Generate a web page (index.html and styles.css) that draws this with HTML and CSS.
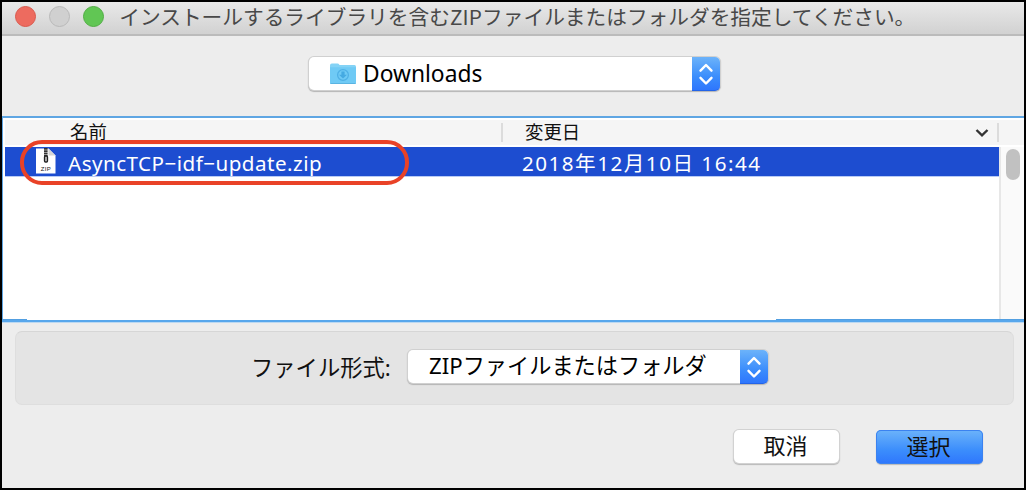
FILE: index.html
```html
<!DOCTYPE html>
<html lang="ja">
<head>
<meta charset="utf-8">
<title>Downloads</title>
<link rel="stylesheet" href="styles.css">
</head>
<body>
<main class="window">
  <header class="titlebar">
    <span class="light light-close"></span>
    <span class="light light-min"></span>
    <span class="light light-zoom"></span>
    <h1 class="title">インストールするライブラリを含む<span class="latin">ZIP</span>ファイルまたはフォルダを指定してください。</h1>
  </header>
  <section class="location">
    <div class="select select-folder">
      <svg class="folder" viewBox="0 0 26 22" width="26" height="22">
        <path d="M0 2.5Q0 .6 1.8 .6H7.4Q8.6 .6 9.6 2H24.5Q26 2 26 3.8V19.5Q26 21 24.5 21H1.5Q0 21 0 19.5Z" fill="#84d3f6"/>
        <path d="M0 4.3H26V19.5Q26 21 24.5 21H1.5Q0 21 0 19.5Z" fill="#6fcaf5"/>
        <path d="M.5 20.5H25.5" stroke="#5ab4e2"/>
        <circle cx="13" cy="12" r="5.4" fill="none" stroke="#4fb0e5" stroke-width="1.3"/>
        <path d="M11.4 8.6H14.6V11.8H17L13 15.6L9 11.8H11.4Z" fill="#45aae2"/>
      </svg>
      <span class="folder-name">Downloads</span>
      <span class="stepper"><svg viewBox="0 0 28 34" width="28" height="34"><path d="M8.5 13.7L14 8L19.5 13.7M8.5 20.8L14 26.5L19.5 20.8"/></svg></span>
    </div>
  </section>
  <section class="files">
    <div class="columns">
      <span class="col-name">名前</span>
      <span class="col-date">変更日</span>
      <svg class="sort" viewBox="0 0 14 10" width="14" height="10"><path d="M1.5 2L7 7.4L12.5 2"/></svg>
    </div>
    <div class="body">
      <div class="rows">
        <div class="row">
          <svg class="zip" viewBox="0 0 20 26" width="20" height="26">
            <path d="M0 .5H12.5L19.5 7.5V25.5H0Z" fill="#fff"/>
            <path d="M12.5 .5V7.5H19.5Z" fill="#d5d5d5"/>
            <path d="M9.8 0V9" stroke="#333" stroke-width="3.6" stroke-dasharray="1.8 .5"/>
            <rect x="8.5" y="8" width="3" height="6" rx="1" fill="#bbb" stroke="#222" stroke-width="1.3"/>
            <text class="zip-label" x="10" y="23.2">ZIP</text>
          </svg>
          <span class="file-name">AsyncTCP−idf−update.zip</span>
          <span class="file-date">2018年12月10日 16:44</span>
          <span class="highlight"></span>
        </div>
      </div>
      <div class="scrollbar"><span class="thumb"></span></div>
    </div>
    <div class="edge"><span class="edge-left"></span><span class="edge-right"></span></div>
  </section>
  <section class="format">
    <span class="format-label">ファイル形式:</span>
    <div class="select select-format">
      <span class="format-name">ZIPファイルまたはフォルダ</span>
      <span class="stepper"><svg viewBox="0 0 28 34" width="28" height="34"><path d="M8.5 13.7L14 8L19.5 13.7M8.5 20.8L14 26.5L19.5 20.8"/></svg></span>
    </div>
  </section>
  <footer class="actions">
    <button class="button">取消</button>
    <button class="button button-primary">選択</button>
  </footer>
</main>
</body>
</html>
```
FILE: styles.css
```css
* { box-sizing: border-box; }
body { margin: 0; font-family: "Noto Sans", "Noto Sans CJK JP", sans-serif; color: #111; }
svg { display: block; flex: none; }
span { white-space: nowrap; }

.window { width: 1026px; height: 490px; border: 2px solid #000; background: #ededed; display: flex; flex-direction: column; overflow: hidden; }

.titlebar { flex: none; height: 34px; display: flex; align-items: center; padding: 0 0 4px 13px; background: linear-gradient(#e9e9e9, #d2d2d2 31px); border-bottom: 2px solid #bbb; }
.light { width: 21px; height: 21px; margin-right: 13.1px; border-radius: 50%; border: 1px solid; flex: none; }
.light-close { background: #ed6b5f; border-color: #d9594d; }
.light-min { background: #d0d0d0; border-color: #b9b9b9; }
.light-zoom { background: #61c654; border-color: #51ad44; }
.title { margin: 0 0 0 2px; font: 400 20.7px/30px "Noto Sans CJK JP", sans-serif; color: #484848; white-space: nowrap; }
.latin { letter-spacing: .2px; }

.location { flex: none; height: 80px; padding: 21px 0 0 307px; }
.select { height: 33px; display: flex; align-items: center; background: #fff; border-radius: 5px; box-shadow: 0 0 0 1px #d0d0d0, 0 1px 1px 1px #b4b4b4; }
.select-folder { width: 411px; padding-left: 21px; }
.folder { margin-top: 1px; }
.folder-name { margin: 1px 0 0 7px; font-size: 22.8px; line-height: 30px; color: #000; }
.stepper { margin-left: auto; width: 28px; height: 34px; border-radius: 0 5px 5px 0; background: linear-gradient(#6cb3fa, #3b8dfc 60%, #2e76fd); border-bottom: 1px solid #2364e8; flex: none; }
.stepper path { fill: none; stroke: #fff; stroke-width: 2.4; stroke-linecap: round; stroke-linejoin: round; }

.files { flex: none; height: 207px; background: #fff; border-top: 2px solid #5fa6e3; border-left: 1px solid #5fa6e3; display: flex; flex-direction: column; }
.columns { height: 25px; margin: 2px 0 2px 2px; background: #f5f5f5; display: flex; align-items: center; font: 18.4px/25px "Noto Sans CJK JP", sans-serif; }
.col-name { width: 498px; height: 19px; padding-left: 65px; border-right: 2px solid #dcdcdc; line-height: 16px; }
.col-date { padding-left: 22px; height: 19px; line-height: 16px; }
.sort { margin: 0 8px 0 auto; }
.sort path { fill: none; stroke: #333; stroke-width: 2.4; }
.columns::after { content: ""; width: 2px; height: 19px; margin-right: 25px; background: #dcdcdc; }
.body { flex: 1; display: flex; }
.rows { width: 996px; padding-left: 2px; }
.row { position: relative; height: 30px; display: flex; align-items: center; background: #1d4dd0; border-bottom: 1px solid #b8cbf5; color: #fff; font: 20.6px/29px "Noto Sans", "Noto Sans CJK JP", sans-serif; padding-left: 31px; }
.zip { margin-top: -2px; }
.zip-label { font: 6px "Liberation Sans", sans-serif; text-anchor: middle; fill: #222; letter-spacing: .4px; }
.file-name { margin: 3px 0 0 12px; width: 454px; letter-spacing: .48px; }
.file-date { margin-top: 4px; letter-spacing: 1.5px; }
.highlight { position: absolute; left: 15px; top: -7px; width: 389px; height: 45px; border: 4px solid #e94227; border-radius: 22px; }
.scrollbar { flex: 1; border-left: 2px solid #e7e7e7; background: #fafafa; padding: 2px 0 0 5px; }
.thumb { display: block; width: 14px; height: 31px; border-radius: 7px; background: #c1c1c1; }
.edge { flex: none; height: 4px; margin-left: -1px; display: flex; justify-content: space-between; background: linear-gradient(#fff 1px, #58a7ec 1px 3px, #bcd9f2 3px); }
.edge-left, .edge-right { height: 1px; background: #529fe1; }
.edge-left { width: 25px; }
.edge-right { width: 248px; }

.format { flex: none; height: 74px; margin: 8px 10px 0 13px; padding-left: 235px; display: flex; align-items: center; background: #e4e4e4; border: 1px solid #dedede; border-top-color: #d6d6d6; border-radius: 7px; }
.format-label { width: 157px; font: 22.3px/30px "Noto Sans", "Noto Sans CJK JP", sans-serif; }
.select-format { width: 360px; margin-top: -3px; padding-left: 21px; }
.format-name { font-size: 22.2px; line-height: 30px; color: #000; margin-top: -2px; }

.actions { flex: none; display: flex; justify-content: flex-end; gap: 37px; padding: 25px 41px 0 0; }
.button { width: 105px; height: 33px; margin: 0; padding: 0 2px 4px 0; border: 0; border-radius: 5px; background: #fff; color: #111; font: 22px/29px "Noto Sans CJK JP", sans-serif; box-shadow: 0 0 0 1px #d2d2d2, 0 1px 1px 1px #b8b8b8; }
.button-primary { width: 107px; height: 34px; background: linear-gradient(#6cb3fa, #3b8dfc 60%, #2e76fd); box-shadow: inset 0 0 0 1px #3b82f0, 0 1px 1px #b8b8b8; }
```
